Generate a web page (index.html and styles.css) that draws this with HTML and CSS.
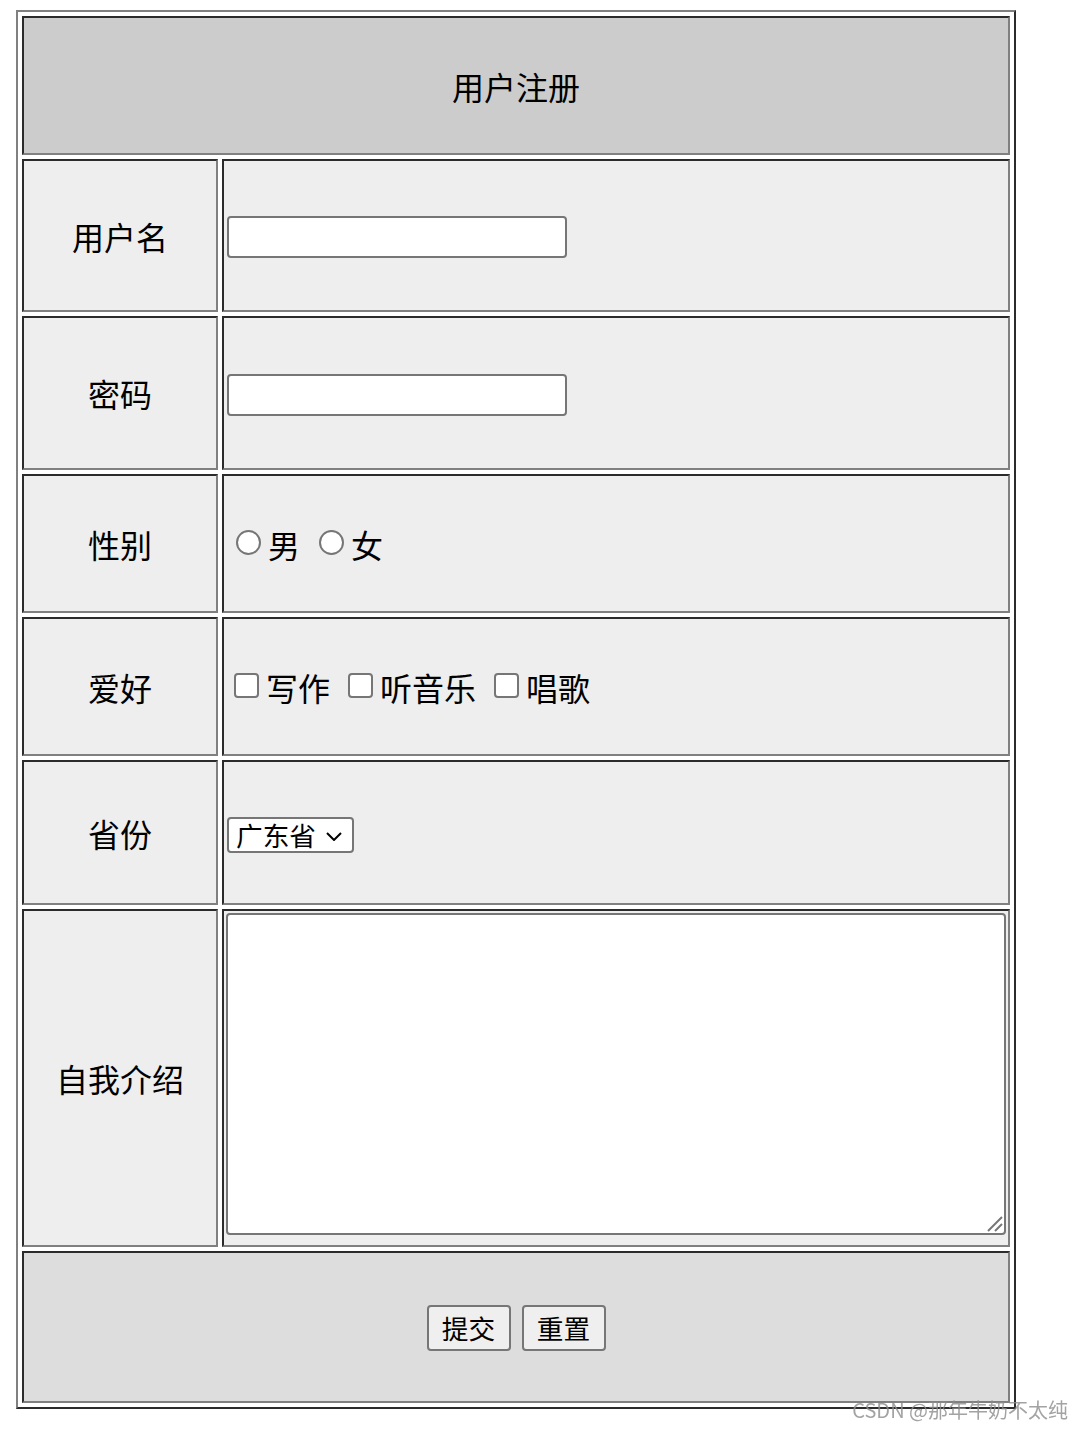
FILE: index.html
```html
<!DOCTYPE html>
<html lang="zh">
<head>
<meta charset="utf-8">
<title>用户注册</title>
<link rel="stylesheet" href="styles.css">
</head>
<body>
<form class="reg-form">
<table class="reg-table">
  <tr class="row-head">
    <td class="cell head" colspan="2">用户注册</td>
  </tr>
  <tr class="row-user">
    <td class="cell label">用户名</td>
    <td class="cell value"><input class="text-input" type="text"></td>
  </tr>
  <tr class="row-pass">
    <td class="cell label">密码</td>
    <td class="cell value"><input class="text-input" type="password"></td>
  </tr>
  <tr class="row-sex">
    <td class="cell label">性别</td>
    <td class="cell value">
      <div class="options">
        <label class="opt"><input class="radio" type="radio" name="sex"><span>男</span></label>
        <label class="opt"><input class="radio" type="radio" name="sex"><span>女</span></label>
      </div>
    </td>
  </tr>
  <tr class="row-hobby">
    <td class="cell label">爱好</td>
    <td class="cell value">
      <div class="options checks">
        <label class="opt"><input class="check" type="checkbox"><span>写作</span></label>
        <label class="opt"><input class="check" type="checkbox"><span>听音乐</span></label>
        <label class="opt"><input class="check" type="checkbox"><span>唱歌</span></label>
      </div>
    </td>
  </tr>
  <tr class="row-prov">
    <td class="cell label">省份</td>
    <td class="cell value">
      <div class="select">
        <span class="select-text">广东省</span>
        <svg class="chev" width="16" height="9" viewBox="0 0 16 9"><path d="M1 1 L8 8 L15 1" fill="none" stroke="#000" stroke-width="2"/></svg>
      </div>
    </td>
  </tr>
  <tr class="row-intro">
    <td class="cell label">自我介绍</td>
    <td class="cell value">
      <div class="ta-wrap">
        <textarea class="ta"></textarea>
        <svg class="grip" width="18" height="18" viewBox="0 0 18 18"><path d="M3 17 L17 3 M10 17 L17 10" stroke="#777" stroke-width="2" fill="none"/></svg>
      </div>
    </td>
  </tr>
  <tr class="row-foot">
    <td class="cell foot" colspan="2">
      <div class="btns">
        <button class="btn" type="button">提交</button>
        <button class="btn" type="button">重置</button>
      </div>
    </td>
  </tr>
</table>
</form>
<div class="watermark">CSDN @那年牛奶不太纯</div>
</body>
</html>
```
FILE: styles.css
```css
* { box-sizing: border-box; }
html, body { background: #fff; }
body {
  margin: 10px 0 0 16px;
  font-family: "Noto Sans CJK SC", "Noto Sans", sans-serif;
  color: #000;
}
.reg-form { margin: 0; }
.reg-table {
  width: 1000px;
  border-collapse: separate;
  border-spacing: 4px;
  border: 2px solid;
  border-color: #808080 #2b2b2b #2b2b2b #808080;
}
.cell {
  border: 2px solid;
  border-color: #2b2b2b #808080 #808080 #2b2b2b;
  padding: 2px;
  font-size: 32px;
  line-height: 40px;
  vertical-align: middle;
}
.head { background: #ccc; text-align: center; }
.label { width: 198px; background: #eee; text-align: center; }
.value { background: #eee; }
.foot { background: #ddd; text-align: center; }

.row-head { height: 139px; }
.row-user { height: 153px; }
.row-pass { height: 154px; }
.row-sex { height: 139px; }
.row-hobby { height: 139px; }
.row-prov { height: 145px; }
.row-intro { height: 338px; }
.row-foot { height: 152px; }

.text-input {
  display: block;
  margin: 3px 0 0 1px;
  width: 340px;
  height: 42px;
  border: 2px solid #767676;
  border-radius: 4px;
  background: #fff;
  padding: 0 4px;
  font-size: 26px;
}
.options { display: flex; align-items: center; margin-left: 8px; gap: 17px; }
.checks { margin-left: 6px; gap: 16px; }
.opt { display: flex; align-items: center; }
.radio, .check {
  appearance: none;
  -webkit-appearance: none;
  margin: 0 7px 0 2px;
  width: 25px;
  height: 25px;
  border: 2px solid #767676;
  background: #fff;
}
.radio { border-radius: 50%; margin-top: -3px; }
.check { border-radius: 4px; margin: -2px 7px 0 2px; }

.select {
  display: flex;
  align-items: center;
  margin: 5px 0 0 1px;
  width: 127px;
  height: 36px;
  border: 2px solid #767676;
  border-radius: 4px;
  background: #fff;
  padding-left: 7px;
  font-size: 26.67px;
  line-height: 32px;
}
.select-text { flex: none; }
.chev { margin-left: 10px; margin-top: 3px; }

.ta-wrap { position: relative; margin: 0 0 8px 0; width: 780px; height: 322px; }
.ta {
  display: block;
  width: 780px;
  height: 322px;
  border: 2px solid #767676;
  border-radius: 4px;
  background: #fff;
  resize: none;
  margin: 0;
}
.grip { position: absolute; right: 3px; bottom: 3px; }

.btns { display: flex; justify-content: center; gap: 11px; padding-top: 2px; }
.btn {
  width: 84px;
  height: 46px;
  border: 2px solid #767676;
  border-radius: 4px;
  background: #efefef;
  font-family: "Noto Sans CJK SC", sans-serif;
  font-size: 26.67px;
  line-height: 36px;
  color: #000;
  padding: 0;
}

.watermark {
  position: fixed;
  right: 15px;
  bottom: 7px;
  font-family: "Noto Sans CJK SC", "Noto Sans", sans-serif;
  font-size: 20px;
  line-height: 26px;
  color: rgba(140, 140, 140, 0.8);
  white-space: nowrap;
}
```
